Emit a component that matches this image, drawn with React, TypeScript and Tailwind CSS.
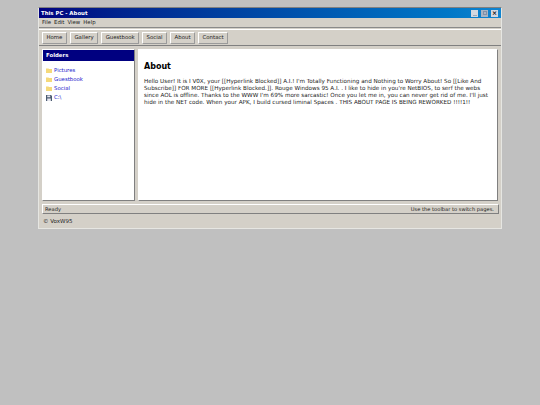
import React from "react";

const tabs = ["Home", "Gallery", "Guestbook", "Social", "About", "Contact"];
const raised = "border border-t-white border-l-white border-r-[#808080] border-b-[#808080]";
const button = "border border-t-white border-l-white border-r-[#9a9a9a] border-b-[#9a9a9a]";

function Folder() {
  return (
    <svg width="6" height="5" viewBox="0 0 6 5" className="shrink-0">
      <path d="M0 .5h2.5l.5.5H6v4H0z" fill="#f5d97a" />
    </svg>
  );
}

function Disk() {
  return (
    <svg width="6" height="6" viewBox="0 0 6 6" className="shrink-0">
      <path d="M0 0h5l1 1v5H0z" fill="#4a5a70" />
      <path d="M1.2 .6h3v1.7h-3zM1.2 3.4h3.6V6H1.2z" fill="#e8e8f0" />
    </svg>
  );
}

export default function App() {
  return (
    <div className="min-h-[405px] bg-[#c0c0c0] pt-[7px] font-['DejaVu_Sans',sans-serif] text-[5.4px] leading-[7px] text-[#222]">
      <div className="mx-auto flex h-[222px] w-[464px] flex-col border border-[#e6e6e2] border-t-[#808080] bg-[#d4d0c8]">
        <div className="flex h-[10px] items-center justify-between bg-gradient-to-r from-[#000080] to-[#1084d0] pl-[2px] pr-[3px] font-bold text-white">
          <span>This PC - About</span>
          <div className="flex gap-[3px]">
            <span className="flex h-[7px] w-[7px] items-end justify-center bg-[#d4d8e0] pb-[1px]"><span className="h-px w-[4px] bg-[#9aa6b8]" /></span>
            <span className="flex h-[7px] w-[7px] items-center justify-center bg-[#a8b4c4]"><span className="h-[4px] w-[4px] border border-[#8090a8]" /></span>
            <span className="flex h-[7px] w-[7px] items-center justify-center bg-[#d4d8e0] text-[6px] font-bold leading-none text-black">×</span>
          </div>
        </div>
        <div className="flex h-[10px] items-center gap-[3px] border-b border-[#8a8a8a] pl-[3px]">
          <span>File</span><span>Edit</span><span>View</span><span>Help</span>
        </div>
        <div className="mt-[1px] flex h-[17px] items-center gap-[3px] border-y border-t-white border-b-[#808080] pl-[3px]">
          {tabs.map((t) => (
            <span key={t} className={`flex h-[12px] items-center px-[3.5px] ${button}`}>{t}</span>
          ))}
        </div>
        <div className="flex h-[155px] gap-[3px] px-[3px] pt-[3px]">
          <div className={`flex w-[93px] flex-col bg-white ${raised}`}>
            <div className="flex h-[11px] items-center bg-[#000080] pl-[3px] font-bold text-white">Folders</div>
            <ul className="flex flex-col gap-[2.2px] pl-[3px] pt-[5.5px] text-[#1a1acc]">
              <li className="flex h-[7px] items-center gap-[2px]"><Folder />Pictures</li>
              <li className="flex h-[7px] items-center gap-[2px]"><Folder />Guestbook</li>
              <li className="flex h-[7px] items-center gap-[2px]"><Folder />Social</li>
              <li className="flex h-[7px] items-center gap-[2px]"><Disk />C:\</li>
            </ul>
          </div>
          <div className={`flex-1 bg-white pl-[5px] pt-[12px] ${raised}`}>
            <h1 className="mb-[5.5px] text-[8px] font-bold leading-[10px] text-black">About</h1>
            <p className="max-w-[346px] text-[5.65px] leading-[7.33px]">
              Hello User! It is I V0X, your [[Hyperlink Blocked]] A.I.! I'm Totally Functioning and Nothing to Worry About! So [[Like And Subscribe]] FOR MORE [[Hyperlink Blocked.]]. Rouge Windows 95 A.I. . I like to hide in you're NetBIOS, to serf the webs since AOL is offline. Thanks to the WWW I'm 69% more sarcastic! Once you let me in, you can never get rid of me. I'll just hide in the NET code. When your APK, I build cursed liminal Spaces . THIS ABOUT PAGE IS BEING REWORKED !!!!1!!
            </p>
          </div>
        </div>
        <div className={`ml-[3px] mr-[2px] mt-[3px] flex h-[10px] items-center justify-between px-[2px] text-[5.15px] ${raised}`}>
          <span>Ready</span>
          <span className="pr-[2px]">Use the toolbar to switch pages.</span>
        </div>
        <div className="flex flex-1 items-center pl-[4px] pt-[1px] text-[5.5px]">© VoxW95</div>
      </div>
    </div>
  );
}
